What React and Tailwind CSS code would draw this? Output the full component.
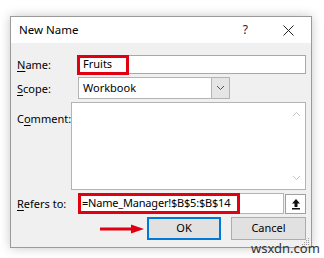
import React from 'react';

const font = { fontFamily: '"Noto Sans", "Open Sans", sans-serif' };

const Label = ({ k, pre = '', rest }) => (
  <span className="w-[61px] shrink-0 text-[11px] text-black leading-none">
    {pre}<span className="underline underline-offset-2">{k}</span>{rest}
  </span>
);

const Chevron = ({ up }) => (
  <svg width="9" height="6" viewBox="0 0 9 6">
    <path d={up ? 'M1 5 L4.5 1.5 L8 5' : 'M1 1 L4.5 4.5 L8 1'} fill="none" stroke="currentColor" strokeWidth="1" />
  </svg>
);

export default function App() {
  return (
    <div className="w-[324px] h-[258px] bg-white relative overflow-hidden" style={font}>
      <div className="absolute left-[10px] top-[16px] w-[302px] h-[232px] border border-[#9a9a9a] bg-[#f0f0f0] shadow-[0_0_10px_rgba(0,0,0,0.22)] flex flex-col">
        {/* Title bar */}
        <div className="h-[26px] bg-white flex items-center pl-[8px] pr-[17px]">
          <span className="text-[11.5px] text-black flex-1">New Name</span>
          <span className="text-[12px] text-[#222] mr-[35px]">?</span>
          <svg width="11" height="11" viewBox="0 0 11 11">
            <path d="M0.5 0.5 L10.5 10.5 M10.5 0.5 L0.5 10.5" stroke="#222" strokeWidth="1" />
          </svg>
        </div>

        <div className="flex flex-col pl-[6px] pr-[5px] pt-[12px]">
          {/* Name */}
          <div className="flex items-center h-[19px]">
            <Label k="N" rest="ame:" />
            <div className="relative flex-1 h-[19px] bg-white border border-[#a8a8a8] flex items-center pl-[4px]">
              <span className="text-[11px] text-black">Fruits</span>
              <div className="absolute left-[-2px] top-[-1px] w-[52px] h-[20px] border-[3px] border-[#e0000f]" />
            </div>
          </div>

          {/* Scope */}
          <div className="flex items-center mt-[3px] h-[22px]">
            <Label k="S" rest="cope:" />
            <div className="w-[152px] h-[22px] bg-white border border-[#b4b4b4] flex items-center">
              <span className="flex-1 pl-[4px] text-[11px] text-black">Workbook</span>
              <div className="w-[18px] h-full bg-[#e5e5e5] border-l border-[#b4b4b4] flex items-center justify-center text-[#555]">
                <Chevron />
              </div>
            </div>
          </div>

          {/* Comment */}
          <div className="flex items-start mt-[3px]">
            <div className="pt-[3px]"><Label pre="C" k="o" rest="mment:" /></div>
            <div className="flex-1 h-[88px] bg-white border border-[#b4b4b4] flex justify-end">
              <div className="w-[17px] h-full flex flex-col items-center justify-between py-[8px] text-[#c4c4c4]">
                <Chevron up />
                <Chevron />
              </div>
            </div>
          </div>

          {/* Refers to */}
          <div className="flex items-center mt-[3px] h-[21px]">
            <Label k="R" rest="efers to:" />
            <div className="relative flex-1 h-[21px] bg-white border border-[#b4b4b4] flex items-center pl-[3px]">
              <span className="text-[11px] tracking-[-0.2px] text-black flex-1 whitespace-nowrap">=Name_Manager!$B$5:$B$14</span>
              <div className="absolute left-[-1px] top-[-1px] w-[162px] h-[21px] border-[3px] border-[#e0000f]" />
            </div>
            <div className="w-[21px] h-[20px] ml-[1px] bg-white border border-[#a0a0a0] flex items-center justify-center">
              <svg width="10" height="12" viewBox="0 0 10 12">
                <path d="M5 1 L1 5.5 H3.5 V9 H6.5 V5.5 H9 Z" fill="#111" />
                <rect x="1" y="10" width="8" height="1.5" fill="#111" />
              </svg>
            </div>
          </div>

          {/* Buttons */}
          <div className="flex items-center justify-end mt-[3px] h-[23px]">
            <svg width="45" height="10" viewBox="0 0 45 10" className="mr-[2px]">
              <path d="M0 5 H34" stroke="#e0000f" strokeWidth="3" />
              <path d="M31 0.5 L44 5 L31 9.5 Z" fill="#e0000f" />
            </svg>
            <button className="w-[74px] h-[23px] bg-[#e1e1e1] border-2 border-[#0078d7] text-[11px] text-black">OK</button>
            <button className="w-[75px] h-[23px] ml-[10px] bg-[#e1e1e1] border border-[#adadad] text-[11px] text-black">Cancel</button>
          </div>
        </div>

        {/* resize grip */}
        <svg width="10" height="10" viewBox="0 0 10 10" className="absolute right-[1px] bottom-[1px]">
          <g fill="#a0a0a0">
            <rect x="8" y="2" width="1" height="1" />
            <rect x="6" y="4" width="1" height="1" />
            <rect x="8" y="4" width="1" height="1" />
            <rect x="4" y="6" width="1" height="1" />
            <rect x="6" y="6" width="1" height="1" />
            <rect x="8" y="6" width="1" height="1" />
            <rect x="2" y="8" width="1" height="1" />
            <rect x="4" y="8" width="1" height="1" />
            <rect x="6" y="8" width="1" height="1" />
            <rect x="8" y="8" width="1" height="1" />
          </g>
        </svg>
      </div>

      <span className="absolute left-[251px] top-[242px] text-[13px] text-[#333] leading-none">wsxdn.com</span>
    </div>
  );
}
